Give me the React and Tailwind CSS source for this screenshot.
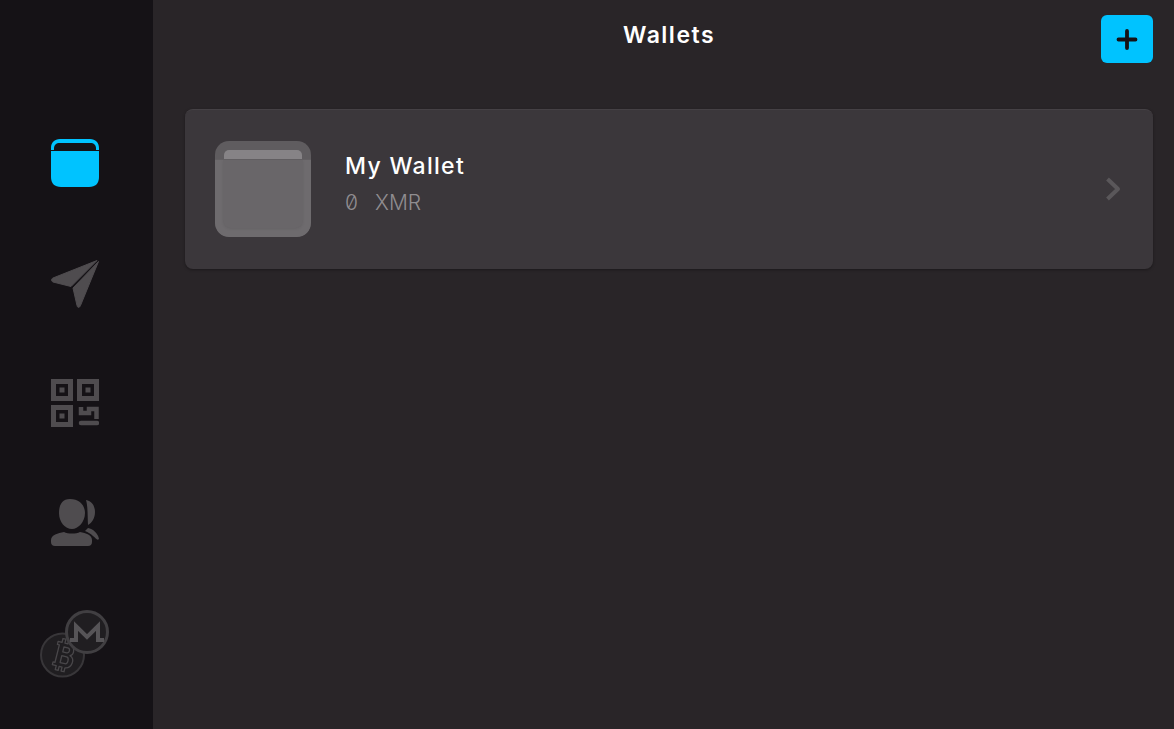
const navGrey = "#4f4c4f";

function WalletNavIcon() {
  return (
    <svg width="48" height="48" viewBox="0 0 48 48">
      <path d="M0 11 V9 C0 3.500 3.500 0 9 0 H39 C44.500 0 48 3.500 48 9 V11 H45 V9.500 C45 6 43 4 39 4 H9 C5 4 3 6 3 9.500 V11 Z" fill="#00c3ff" />
      <path d="M0 12 H48 V38 C48 44.500 44.500 48 38 48 H10 C3.500 48 0 44.500 0 38 Z" fill="#00c3ff" />
    </svg>
  );
}

function SendIcon() {
  return (
    <svg width="48" height="50" viewBox="0 0 48 50">
      <path d="M46 2.500 L2 20 C0 21 0 23 2 24 L20 28.500 Z" fill={navGrey} stroke={navGrey} strokeWidth="1" strokeLinejoin="round" />
      <path d="M47.500 3.500 L22 30 L26 47.500 C26.500 50 28.500 50 29.500 47.500 Z" fill={navGrey} stroke={navGrey} strokeWidth="1" strokeLinejoin="round" />
    </svg>
  );
}

function QrIcon() {
  return (
    <svg width="48" height="48" viewBox="0 0 48 48" fill="none" stroke={navGrey}>
      <rect x="2.500" y="2.500" width="17" height="17" strokeWidth="5" />
      <rect x="28.500" y="2.500" width="17" height="17" strokeWidth="5" />
      <rect x="2.500" y="28.500" width="17" height="17" strokeWidth="5" />
      <rect x="8.500" y="8.500" width="5" height="5" fill={navGrey} stroke="none" />
      <rect x="34.500" y="8.500" width="5" height="5" fill={navGrey} stroke="none" />
      <rect x="8.500" y="34.500" width="5" height="5" fill={navGrey} stroke="none" />
      <path d="M30 28 V34 H38 V30 H45.500 V40" strokeWidth="4.500" />
      <path d="M30 44 H46" strokeWidth="4.500" strokeLinecap="round" />
    </svg>
  );
}

function ContactsIcon() {
  return (
    <svg width="48" height="48" viewBox="0 0 48 48" fill={navGrey}>
      <path d="M19 1 C28 1 34 7 34 15 C34 24 27 31 21 31 C14 31 8 24 8 15 C8 7 11 1 19 1 Z" />
      <path d="M35 2 C41 3 44 8 44 14 C44 20 41 25 37 27 C36.500 19 37 9 35 2 Z" />
      <path d="M13 34 C17 36 25 36 29 34 C35 35 41 37 41 42 V44 C41 46.500 39.500 48 37 48 H4 C1.500 48 0 46.500 0 44 V42 C0 37 7 35 13 34 Z" />
      <path d="M37 30 C42 31 47 35 48 41 C46 43 45 40 42 38 C40 36 37 34 34 33 Z" />
    </svg>
  );
}

function CoinsIcon() {
  return (
    <svg width="70" height="68" viewBox="0 0 70 68" fill="none">
      <circle cx="22.500" cy="45" r="21.500" fill="#201e21" stroke="#383639" strokeWidth="2" />
      <g transform="rotate(14 23 45)" stroke="#49474a" strokeWidth="1.300" strokeLinejoin="round">
        <path d="M15 33 H19 V29 H22 V33 H25 V29 H28 V33.500 C33 35 34 42 30 44 C36 46 35 56 28 57 V61 H25 V57 H22 V61 H19 V57 H15 V54 H17 V36 H15 Z" />
        <path d="M22 37 H26 C29 37 29 42 26 42 H22 Z M22 46 H27 C30 46 30 53 27 53 H22 Z" />
      </g>
      <circle cx="47" cy="22" r="20.500" fill="#201e21" stroke="#413f42" strokeWidth="3" />
      <path d="M30 30 H36 V16 L47 27 L58 16 V30 H64" stroke="#565457" strokeWidth="4" />
    </svg>
  );
}

function WalletThumb() {
  return (
    <div className="relative w-24 h-24 rounded-[14px] bg-[#5f5c5f] overflow-hidden">
      <div className="absolute left-[9px] right-[9px] top-[9px] h-[12px] rounded-t-[5px] bg-[#868386]" />
      <div className="absolute left-0 right-0 top-[18px] bottom-0 rounded-b-[14px] bg-[#6e6b6e] border-t border-[#625f62]">
        <div className="mx-2 h-[68px] rounded-b-[8px] bg-[#696669] shadow-[0_1px_3px_rgba(0,0,0,0.08)]" />
      </div>
    </div>
  );
}

export default function App() {
  return (
    <div className="flex h-[729px] overflow-hidden bg-[#292528] font-['Inter',sans-serif]">
      <aside className="w-[153px] shrink-0 bg-[#151216] flex flex-col items-center pt-[139px] pr-[3px]">
        <div className="flex flex-col items-center gap-[71px]">
          <WalletNavIcon />
          <SendIcon />
          <QrIcon />
          <ContactsIcon />
        </div>
        <div className="mt-[63px] translate-y-[1px]">
          <CoinsIcon />
        </div>
      </aside>
      <main className="flex-1 pl-8 pr-[21px]">
        <header className="flex items-start pt-[16px] pl-[52px]">
          <h1 className="flex-1 text-center text-[23px] leading-[38px] font-semibold tracking-[1.5px] text-white">Wallets</h1>
          <button className="-mt-[1px] w-[52px] h-12 rounded-md bg-[#00c3ff] flex items-center justify-center">
            <svg width="22" height="22" viewBox="0 0 22 22" stroke="#151216" strokeWidth="3.800" strokeLinecap="round">
              <path d="M11 3 V20 M2.500 11.500 H19.500" />
            </svg>
          </button>
        </header>
        <section className="mt-[46px] h-40 rounded-lg bg-[#3b373b] border-t border-[#454145] shadow-[0_1px_3px_rgba(0,0,0,0.35)] flex items-center pl-[30px] pr-[31px]">
          <div className="-mt-[1px]">
            <WalletThumb />
          </div>
          <div className="ml-[34px] flex-1 -mt-[13px]">
            <div className="text-[23px] leading-7 font-medium tracking-[1.3px] text-white">My Wallet</div>
            <div className="mt-[11px] text-[21px] leading-6 font-light text-[#908d90] [font-variant-numeric:slashed-zero]">
              <span>0</span>
              <span className="ml-[17px]">XMR</span>
            </div>
          </div>
          <svg width="16" height="24" viewBox="0 0 16 24" fill="none" stroke="#5a575a" strokeWidth="4" strokeLinejoin="round" className="-mt-[1px]">
            <path d="M1.500 2 L12 12 L1.500 22" />
          </svg>
        </section>
      </main>
    </div>
  );
}
